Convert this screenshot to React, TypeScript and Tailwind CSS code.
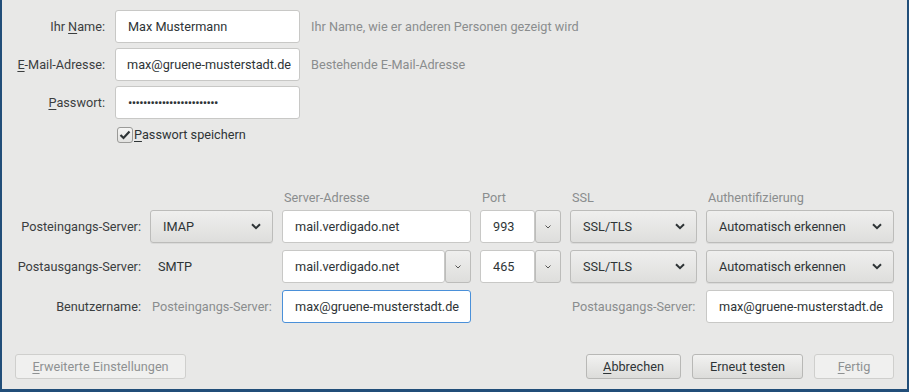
import React from "react";

const font = { fontFamily: "Roboto, 'Noto Sans', sans-serif" };

const Chevron = ({ small }: { small?: boolean }) =>
  small ? (
    <svg width="6" height="4" viewBox="0 0 6 4" className="text-[#555]">
      <path d="M0.5 0.5 L3 3 L5.5 0.5" fill="none" stroke="currentColor" strokeWidth="1" />
    </svg>
  ) : (
    <svg width="10" height="7" viewBox="0 0 10 7" className="text-[#2e3436]">
      <path d="M1 1.2 L5 5.2 L9 1.2" fill="none" stroke="currentColor" strokeWidth="2" />
    </svg>
  );

const Input = ({ value, focused, caret, className = "" }: { value: string; focused?: boolean; caret?: boolean; className?: string }) => (
  <div
    className={`h-[33px] flex items-center bg-white rounded-[3px] border px-3 text-[#2e3436] whitespace-nowrap overflow-hidden ${
      focused ? "border-[#4a90d9]" : "border-[#c8c8c6]"
    } ${className}`}
  >
    <span>{value}</span>
    {caret && <span className="inline-block w-px h-[16px] bg-[#111]" />}
  </div>
);

const Select = ({ value }: { value: string }) => (
  <div className="h-[33px] flex items-center justify-between rounded-[3px] border border-[#bcbcba] bg-gradient-to-b from-[#efefee] to-[#dededc] pl-3 pr-[11px] text-[#2e3436] shadow-[0_1px_0_rgba(0,0,0,0.06)] whitespace-nowrap">
    <span>{value}</span>
    <Chevron />
  </div>
);

const SpinBtn = () => (
  <div className="h-[33px] w-[26px] shrink-0 flex items-center justify-center rounded-[3px] border border-[#bcbcba] bg-gradient-to-b from-[#efefee] to-[#dededc]">
    <Chevron small />
  </div>
);

const U = ({ children }: { children: React.ReactNode }) => <span className="underline underline-offset-2">{children}</span>;

const Button = ({ children, disabled, className = "" }: { children: React.ReactNode; disabled?: boolean; className?: string }) => (
  <div
    className={`h-[25px] flex items-center justify-center rounded-[3px] border whitespace-nowrap ${
      disabled
        ? "border-[#cfcfcd] bg-[#f0f0ef] text-[#8e9192]"
        : "border-[#b8b8b6] bg-gradient-to-b from-[#f2f2f1] to-[#dcdcda] text-[#2e3436]"
    } ${className}`}
  >
    {children}
  </div>
);

const Head = ({ children }: { children: React.ReactNode }) => (
  <div className="pl-[2px] pt-[4px] leading-[10px] h-[14px] text-[#8a8d8e]">{children}</div>
);

export default function App() {
  return (
    <div style={font} className="h-[392px] w-[909px] bg-[#e8e8e7] border-l-2 border-r-2 border-b-[3px] border-[#214e79] flex flex-col text-[12.7px] text-[#2e3436]">
      {/* account */}
      <div className="grid grid-cols-[103px_185px_1fr] gap-x-[10px] gap-y-[5px] pt-[10px] items-center">
        <div className="text-right text-[#3b3e3f]">Ihr <U>N</U>ame:</div>
        <Input value="Max Mustermann" />
        <div className="pl-px text-[#8a8d8e] whitespace-nowrap">Ihr Name, wie er anderen Personen gezeigt wird</div>

        <div className="text-right text-[#3b3e3f] whitespace-nowrap"><U>E</U>-Mail-Adresse:</div>
        <Input value="max@gruene-musterstadt.de" className="!px-[11px]" />
        <div className="pl-px text-[#8a8d8e]">Bestehende E-Mail-Adresse</div>

        <div className="text-right text-[#3b3e3f]"><U>P</U>asswort:</div>
        <Input value="••••••••••••••••••••••••" className="text-[13px] tracking-[-0.65px]" />
        <div />
      </div>

      <div className="flex items-center gap-px pl-[115px] mt-[8px] h-[16px]">
        <div className="w-[16px] h-[16px] rounded-[3px] border border-[#9a9a98] bg-gradient-to-b from-[#f5f5f4] to-[#e2e2e0] flex items-center justify-center">
          <svg width="12" height="10" viewBox="0 0 12 10">
            <path d="M1.5 5 L4.5 8 L10.5 1.5" fill="none" stroke="#2e3436" strokeWidth="2.2" />
          </svg>
        </div>
        <span className="text-[#2e3436]"><U>P</U>asswort speichern</span>
      </div>

      {/* server settings */}
      <div className="grid grid-cols-[139px_123px_189px_81px_127px_188px] gap-x-[9px] gap-y-[7px] items-center mt-[46px]">
        <div />
        <div />
        <Head>Server-Adresse</Head>
        <Head>Port</Head>
        <Head>SSL</Head>
        <Head>Authentifizierung</Head>

        <div className="text-right text-[#3b3e3f] whitespace-nowrap">Posteingangs-Server:</div>
        <Select value="IMAP" />
        <Input value="mail.verdigado.net" />
        <div className="flex">
          <Input value="993" className="w-[55px]" />
          <SpinBtn />
        </div>
        <Select value="SSL/TLS" />
        <Select value="Automatisch erkennen" />

        <div className="text-right text-[#3b3e3f] whitespace-nowrap">Postausgangs-Server:</div>
        <div className="pl-[8px]">SMTP</div>
        <div className="flex">
          <Input value="mail.verdigado.net" className="flex-1" />
          <SpinBtn />
        </div>
        <div className="flex">
          <Input value="465" className="w-[55px]" />
          <SpinBtn />
        </div>
        <Select value="SSL/TLS" />
        <Select value="Automatisch erkennen" />

        <div className="text-right text-[#3b3e3f]">Benutzername:</div>
        <div className="pl-[2px] text-[#8a8d8e] whitespace-nowrap">Posteingangs-Server:</div>
        <Input value="max@gruene-musterstadt.de" focused caret />
        <div />
        <div className="pl-[2px] text-[#8a8d8e] whitespace-nowrap">Postausgangs-Server:</div>
        <Input value="max@gruene-musterstadt.de" />
      </div>

      {/* buttons */}
      <div className="mt-auto flex items-center px-[13px] pb-[10px]">
        <Button disabled className="w-[171px]"><span><U>E</U>rweiterte Einstellungen</span></Button>
        <div className="flex-1" />
        <div className="flex gap-[11px]">
          <Button className="w-[95px]"><span><U>A</U>bbrechen</span></Button>
          <Button className="w-[111px]"><span>Erneu<U>t</U> testen</span></Button>
          <Button disabled className="w-[80px]"><span><U>F</U>ertig</span></Button>
        </div>
      </div>
    </div>
  );
}
